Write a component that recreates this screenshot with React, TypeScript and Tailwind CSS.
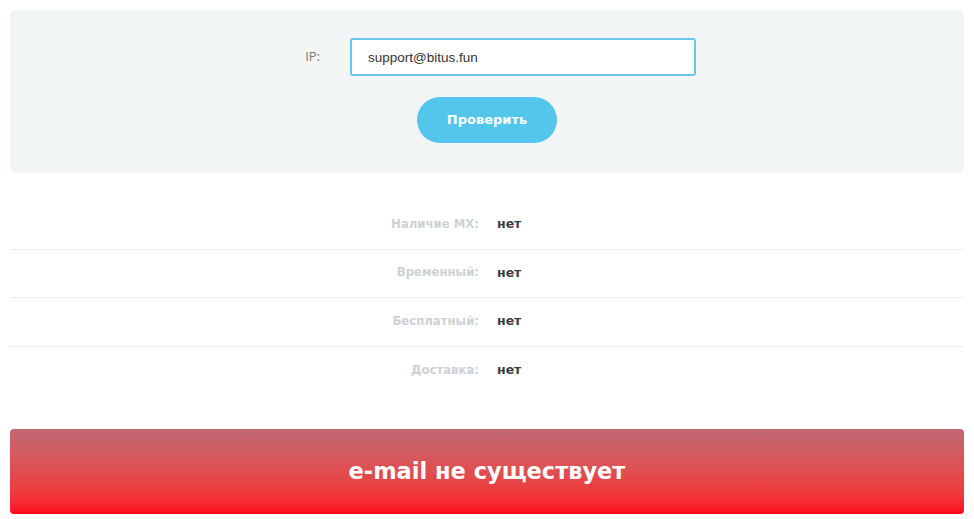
const rows = [
  { label: "Наличие MX:", value: "нет" },
  { label: "Временный:", value: "нет" },
  { label: "Бесплатный:", value: "нет" },
  { label: "Доставка:", value: "нет" },
];

const App = () => {
  return (
    <div className="min-h-screen bg-white px-[10px] pt-[10px] font-['Open_Sans',sans-serif]">
      <div className="flex h-[163px] flex-col items-center rounded-md bg-[#f2f5f6] pt-[28px]">
        <div className="flex items-center gap-[30px]">
          <label className="w-[42px] text-right text-[13px] text-[#777]">IP:</label>
          <input
            className="h-[38px] w-[346px] rounded-[3px] border-2 border-[#6cc6ec] bg-white px-[16px] text-[13.5px] text-[#333] outline-none font-['Liberation_Sans',sans-serif]"
            defaultValue="support@bitus.fun"
          />
        </div>
        <button className="mt-[21px] h-[46px] w-[140px] rounded-full bg-[#54c5eb] text-[13px] font-bold text-white font-['DejaVu_Sans',sans-serif]">
          Проверить
        </button>
      </div>

      <div className="mt-[28px]">
        {rows.map((r, i) => (
          <div
            key={r.label}
            className={`grid h-[48.5px] grid-cols-2 items-center text-[11.7px] font-bold font-['DejaVu_Sans',sans-serif] ${
              i < rows.length - 1 ? "border-b border-[#eceeef]" : ""
            }`}
          >
            <span className="pr-[8px] text-right text-[#cdd1d5]">{r.label}</span>
            <span className="pl-[10px] text-[12.5px] text-[#3a3f46]">{r.value}</span>
          </div>
        ))}
      </div>

      <div className="mt-[34px] flex h-[85px] items-center justify-center rounded-[4px] bg-gradient-to-b from-[#bf6873] to-[#ff0019]">
        <span className="text-[22.5px] font-bold text-white font-['DejaVu_Sans',sans-serif]">e-mail не существует</span>
      </div>
    </div>
  );
};

export default App;
